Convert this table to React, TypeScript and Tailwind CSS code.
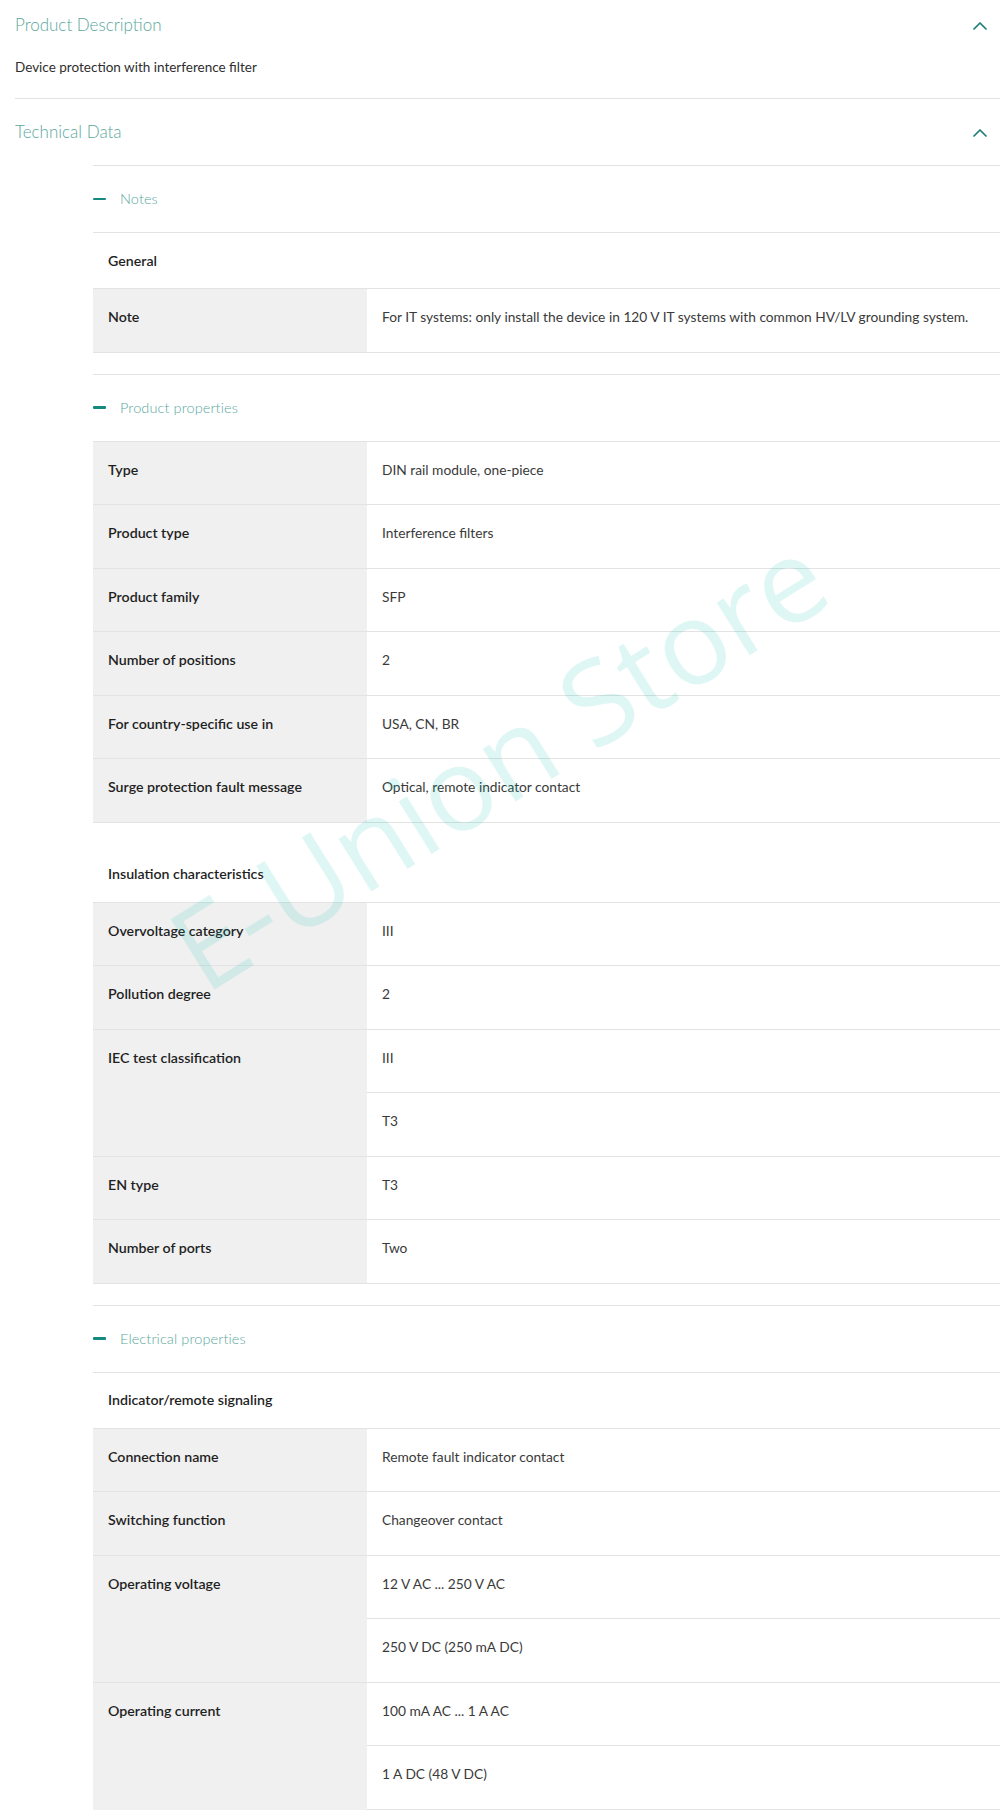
import React from "react";

type Row = { label: string; values: string[] };
type Group = { title?: string; rows: Row[] };
type Section = { title: string; groups: Group[] };

const sections: Section[] = [
  {
    title: "Notes",
    groups: [
      {
        title: "General",
        rows: [
          {
            label: "Note",
            values: [
              "For IT systems: only install the device in 120 V IT systems with common HV/LV grounding system.",
            ],
          },
        ],
      },
    ],
  },
  {
    title: "Product properties",
    groups: [
      {
        rows: [
          { label: "Type", values: ["DIN rail module, one-piece"] },
          { label: "Product type", values: ["Interference filters"] },
          { label: "Product family", values: ["SFP"] },
          { label: "Number of positions", values: ["2"] },
          { label: "For country-specific use in", values: ["USA, CN, BR"] },
          { label: "Surge protection fault message", values: ["Optical, remote indicator contact"] },
        ],
      },
      {
        title: "Insulation characteristics",
        rows: [
          { label: "Overvoltage category", values: ["III"] },
          { label: "Pollution degree", values: ["2"] },
          { label: "IEC test classification", values: ["III", "T3"] },
          { label: "EN type", values: ["T3"] },
          { label: "Number of ports", values: ["Two"] },
        ],
      },
    ],
  },
  {
    title: "Electrical properties",
    groups: [
      {
        title: "Indicator/remote signaling",
        rows: [
          { label: "Connection name", values: ["Remote fault indicator contact"] },
          { label: "Switching function", values: ["Changeover contact"] },
          { label: "Operating voltage", values: ["12 V AC ... 250 V AC", "250 V DC (250 mA DC)"] },
          { label: "Operating current", values: ["100 mA AC ... 1 A AC", "1 A DC (48 V DC)", " "] },
        ],
      },
    ],
  },
];

function Chevron() {
  return (
    <svg width="14" height="9" viewBox="0 0 14 9" className="shrink-0">
      <polyline points="1,8 7,2 13,8" fill="none" stroke="#1b7d75" strokeWidth="1.7" strokeLinecap="round" strokeLinejoin="round" />
    </svg>
  );
}

function DataRow({ row }: { row: Row }) {
  return (
    <div className="flex border-t border-[#e3e3e3]">
      <div className="w-[274px] shrink-0 bg-[#f0f0f0] pl-[15px] pt-[18px] text-[14.2px] leading-[20px] font-semibold text-[#1f1f1f]">
        {row.label}
      </div>
      <div className="flex-1 flex flex-col">
        {row.values.map((v, i) => (
          <div
            key={i}
            className={
              "pl-[15px] pt-[18px] text-[13.75px] leading-[20px] text-[#3a3a3a] " +
              (i > 0 ? "border-t border-[#e3e3e3] h-[63.5px]" : "h-[62.5px]")
            }
          >
            {v}
          </div>
        ))}
      </div>
    </div>
  );
}

function SectionBlock({ section }: { section: Section }) {
  return (
    <div className="mb-[21px]">
      <div className="border-t border-[#e3e3e3] h-[67px] flex items-center">
        <span className="w-[13px] h-[2.5px] bg-[#14897f] rounded-[1px]" />
        <span className="ml-[14px] text-[14.5px] text-[#5aa79d] font-light tracking-[0.1px]">{section.title}</span>
      </div>
      <div className="border-b border-[#e3e3e3]">
        {section.groups.map((g, gi) => (
          <div key={gi}>
            {g.title && (
              <div className={"border-t border-[#e3e3e3] " + (gi > 0 ? "pt-[24px]" : "")}>
                <div className="h-[55px] flex items-center pl-[15px] text-[14.2px] font-semibold text-[#1f1f1f]">
                  {g.title}
                </div>
              </div>
            )}
            {g.rows.map((r, ri) => (
              <DataRow key={ri} row={r} />
            ))}
          </div>
        ))}
      </div>
    </div>
  );
}

export default function App() {
  return (
    <div
      className="relative w-[1000px] h-[1810px] overflow-hidden bg-white"
      style={{ fontFamily: "Lato, 'Open Sans', sans-serif" }}
    >
      <div className="ml-[15px]">
        <div className="h-[50px] flex items-center justify-between pr-[13px]">
          <span className="text-[17px] font-light text-[#5aa79d]">Product Description</span>
          <Chevron />
        </div>
        <div className="pt-[7px] pb-[21px] text-[13.5px] leading-[20px] text-[#2e2e2e]">
          Device protection with interference filter
        </div>
        <div className="border-t border-[#e3e3e3] h-[67px] flex items-center justify-between pr-[13px]">
          <span className="text-[17px] font-light text-[#5aa79d]">Technical Data</span>
          <Chevron />
        </div>
        <div className="ml-[78px]">
          {sections.map((s, i) => (
            <SectionBlock key={i} section={s} />
          ))}
        </div>
      </div>

      <div className="pointer-events-none absolute left-[497px] top-[760px] -translate-x-1/2 -translate-y-1/2 -rotate-[32deg] whitespace-nowrap text-[116px] leading-none text-[rgba(0,190,180,0.13)]"
        style={{ fontFamily: "'Open Sans', sans-serif" }}
      >
        E-Union Store
      </div>
    </div>
  );
}
